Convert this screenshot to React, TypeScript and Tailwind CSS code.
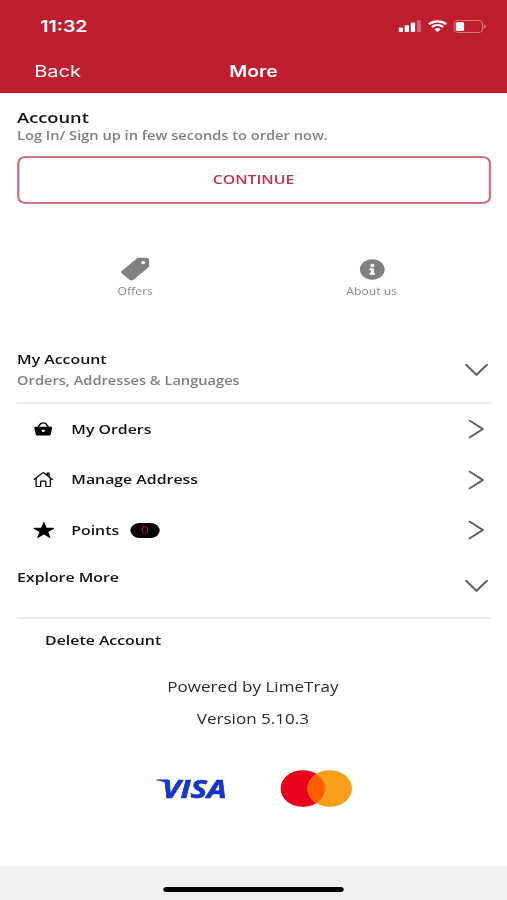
import type { ReactNode } from 'react';
import { FaInfoCircle } from 'react-icons/fa';
import { IoHomeOutline, IoPricetag, IoStar } from 'react-icons/io5';

type ChevronProps = {
  direction: 'down' | 'right';
};

function Chevron({ direction }: ChevronProps) {
  return (
    <span className="flex w-6 shrink-0 justify-center text-[#5f5f5f]">
      {direction === 'down' ? (
        <svg width="20" height="14" viewBox="0 0 20 14" fill="none" stroke="currentColor" strokeWidth="1.8">
          <path d="M1.600 1.800 10 11.800 18.400 1.800" strokeLinecap="round" strokeLinejoin="round" />
        </svg>
      ) : (
        <svg width="14" height="20" viewBox="0 0 14 20" fill="none" stroke="currentColor" strokeWidth="1.8">
          <path d="M1.400 1.600 12.200 10 1.400 18.400" strokeLinecap="round" strokeLinejoin="round" />
        </svg>
      )}
    </span>
  );
}

function StatusIcons() {
  return (
    <div className="flex items-center gap-[5px] text-white">
      <svg width="19" height="12" viewBox="0 0 19 12" fill="currentColor">
        <rect x="0" y="7.5" width="3.6" height="4.5" rx="0.8" />
        <rect x="5" y="5.2" width="3.6" height="6.8" rx="0.8" />
        <rect x="10" y="2.6" width="3.6" height="9.4" rx="0.8" />
        <rect x="15" y="0.3" width="3.6" height="11.7" rx="0.8" opacity="0.3" />
      </svg>
      <svg width="16" height="12" viewBox="0 0 16 12" fill="none" stroke="currentColor">
        <path d="M0.9 4.2a10.2 10.2 0 0 1 14.2 0" strokeWidth="2.2" />
        <path d="M3.4 6.9a6.6 6.6 0 0 1 9.2 0" strokeWidth="2.1" />
        <path d="M8 12 5.4 9.3a3.8 3.8 0 0 1 5.2 0z" fill="currentColor" stroke="none" />
      </svg>
      <svg width="27" height="13" viewBox="0 0 27 13" fill="none">
        <rect x="0.5" y="0.5" width="23.5" height="12" rx="3.4" stroke="#fff" strokeOpacity="0.4" />
        <rect x="2" y="2" width="6.8" height="9" rx="1.6" fill="#fff" />
        <path d="M25.200 4.500v4c.9-.3 1.400-1.100 1.400-2s-.5-1.700-1.400-2z" fill="#fff" fillOpacity="0.45" />
      </svg>
    </div>
  );
}

function BasketIcon() {
  return (
    <svg width="15" height="14" viewBox="0 0 15 14">
      <path d="M3 6C4.200 2.800 6 .9 7.500.9S10.800 2.800 12 6" fill="none" stroke="currentColor" strokeWidth="1.2" />
      <path
        fill="currentColor"
        fillRule="evenodd"
        d="M.9 4.800h13.200c.6 0 .9.400.8.900l-1.200 6.600c-.2.900-.7 1.300-1.400 1.300H2.700c-.7 0-1.200-.4-1.400-1.300L.1 5.700c-.1-.5.200-.9.800-.9zM7.500 7.500a1.300 1.300 0 1 0 0 2.600 1.300 1.300 0 0 0 0-2.600z"
      />
    </svg>
  );
}

type MenuRowProps = {
  icon: ReactNode;
  label: string;
  badge?: string;
};

function MenuRow({ icon, label, badge }: MenuRowProps) {
  return (
    <div className="flex h-[50.500px] items-center pl-[12.500px]">
      <span className="flex w-[18px] justify-center text-black">{icon}</span>
      <span className="ml-[14px] text-[13px] font-semibold text-[#111]">{label}</span>
      {badge ? (
        <span className="ml-[9px] flex h-[15px] w-6 items-center justify-center rounded-full bg-black text-[11px] text-[#a81c30]">
          {badge}
        </span>
      ) : null}
      <span className="ml-auto">
        <Chevron direction="right" />
      </span>
    </div>
  );
}

function Shortcut({ icon, label }: { icon: ReactNode; label: string }) {
  return (
    <div className="flex flex-1 flex-col items-center">
      <span className="flex h-6 items-center text-[#808080]">{icon}</span>
      <span className="mt-[2px] text-[10px] leading-4 text-[#8c8c8c]">{label}</span>
    </div>
  );
}

export default function App() {
  return (
    <div className="h-[900px] w-[507px] overflow-hidden bg-white">
      {/* 416pt layout stretched to the full window width */}
      <div className="flex h-full w-[416px] origin-left scale-x-[1.21875] flex-col font-['Open_Sans',sans-serif]">
        <header className="h-[93px] shrink-0 bg-[#bf1e2e] font-['Inter',sans-serif] text-white">
          <div className="flex h-[52px] items-center justify-between pr-[17px] pl-[33px]">
            <span className="text-[16px] font-semibold">11:32</span>
            <StatusIcons />
          </div>
          <div className="grid h-[38px] grid-cols-3 items-center px-7">
            <span className="text-[16.500px] leading-6">Back</span>
            <span className="text-center text-[16px] leading-6 font-semibold">More</span>
          </div>
        </header>

        <main className="flex flex-1 flex-col pr-[13px] pl-[14px]">
          <section className="pt-[14px]">
            <h1 className="text-[15px] leading-5 font-semibold text-[#111]">Account</h1>
            <p className="text-[12px] leading-[18px] font-semibold text-[#808080]">
              Log In/ Sign up in few seconds to order now.
            </p>
            <button className="mt-[11px] flex h-[48px] w-full items-center justify-center rounded-[7px] border-2 border-[#cd7482] pr-px text-[13px] font-semibold text-[#c0334a]">
              CONTINUE
            </button>
          </section>

          <section className="mt-[53px] flex pr-px">
            <Shortcut icon={<IoPricetag size={26} />} label="Offers" />
            <Shortcut icon={<FaInfoCircle size={21} />} label="About us" />
          </section>

          <section className="mt-[48px]">
            <div className="flex h-[57px] items-center justify-between border-b-2 border-[#ededed] pb-[9px]">
              <div>
                <h2 className="text-[13px] leading-[22px] font-semibold text-[#111]">My Account</h2>
                <p className="text-[12px] leading-[22px] font-semibold text-[#808080]">
                  Orders, Addresses &amp; Languages
                </p>
              </div>
              <Chevron direction="down" />
            </div>
            <MenuRow icon={<BasketIcon />} label="My Orders" />
            <MenuRow icon={<IoHomeOutline size={17} />} label="Manage Address" />
            <MenuRow icon={<IoStar size={18} />} label="Points" badge="0" />
          </section>

          <section>
            <div className="flex h-[63px] items-center justify-between border-b-2 border-[#ededed]">
              <h2 className="pb-[18px] text-[13px] leading-[22px] font-semibold text-[#111]">Explore More</h2>
              <Chevron direction="down" />
            </div>
            <p className="mt-[10px] pl-[23px] text-[13px] leading-[22px] font-semibold text-[#111]">Delete Account</p>
          </section>

          <section className="mt-[25px] flex flex-col items-center pr-[2px] text-[14px] text-[#2b2b2b]">
            <p className="leading-[22px]">Powered by LimeTray</p>
            <p className="mt-[10px] leading-[22px]">Version 5.10.3</p>
            <div className="mt-[40px] flex h-[38px] items-center gap-[39px] pl-[1px]">
              <svg className="overflow-visible" width="64" height="38" viewBox="0 0 64 38" fill="#1434cb">
                <path d="M1 9.600h9.500l2.500 6.500C10 12.600 6 11 1 10.200z" />
                <text
                  x="6"
                  y="27.6"
                  textLength="53"
                  lengthAdjust="spacingAndGlyphs"
                  fontFamily="Open Sans"
                  fontSize="25.5"
                  fontWeight="700"
                  fontStyle="italic"
                  stroke="#1434cb"
                  strokeWidth="0.6"
                >
                  VISA
                </text>
              </svg>
              <svg width="59" height="37" viewBox="0 0 59 37">
                <circle cx="18.500" cy="18.500" r="18.300" fill="#eb001b" />
                <circle cx="40.500" cy="18.500" r="18.300" fill="#f79e1b" />
                <path d="M29.500 3.900a18.300 18.300 0 0 1 0 29.200a18.300 18.300 0 0 1 0-29.200z" fill="#ff5f00" />
              </svg>
            </div>
          </section>
        </main>

        <footer className="flex h-[34px] shrink-0 justify-center bg-[#f0f0f0] pt-[21px]">
          <span className="h-[5px] w-[148px] rounded-full bg-black" />
        </footer>
      </div>
    </div>
  );
}
